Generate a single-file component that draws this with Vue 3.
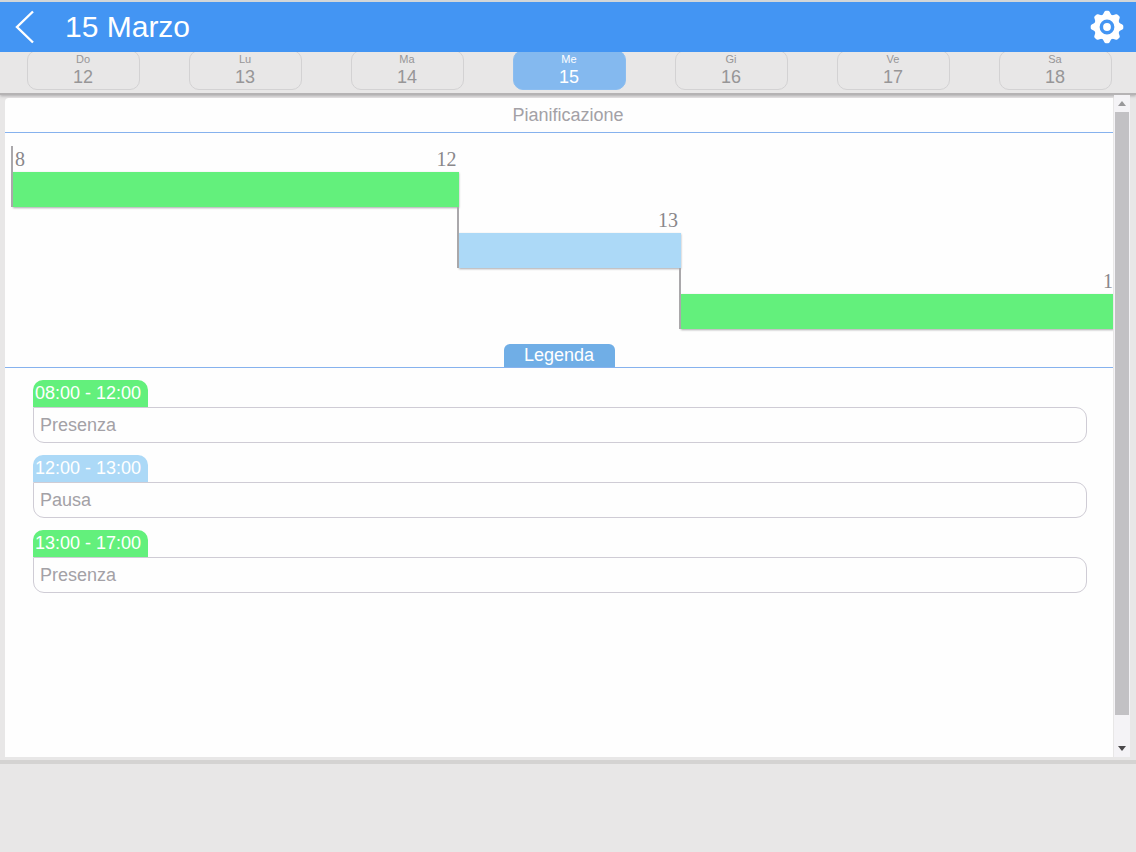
<script setup>
import { ref } from 'vue'

const days = [
  { name: 'Do', number: 12 },
  { name: 'Lu', number: 13 },
  { name: 'Ma', number: 14 },
  { name: 'Me', number: 15 },
  { name: 'Gi', number: 16 },
  { name: 'Ve', number: 17 },
  { name: 'Sa', number: 18 },
]
const selected = ref(15)

const steps = [
  { start: '8', end: '12', offset: 0, width: 40.6, kind: 'work' },
  { start: '', end: '13', offset: 40.5, width: 20.2, kind: 'rest' },
  { start: '', end: '1', offset: 60.6, width: 39.4, kind: 'work' },
]

const entries = [
  { time: '08:00 - 12:00', label: 'Presenza', kind: 'work' },
  { time: '12:00 - 13:00', label: 'Pausa', kind: 'rest' },
  { time: '13:00 - 17:00', label: 'Presenza', kind: 'work' },
]
</script>

<template>
  <div class="app">
    <header class="topbar">
      <button class="icon-button back" type="button" aria-label="Indietro">
        <svg width="20" height="34" viewBox="0 0 20 34" fill="none" stroke="#fff" stroke-width="2.4">
          <path d="M18 1.500L2 17L18 32.500" />
        </svg>
      </button>
      <h1>15 Marzo</h1>
      <button class="icon-button" type="button" aria-label="Impostazioni">
        <svg width="34" height="34" viewBox="-17 -17 34 34">
          <circle r="10.200" fill="none" stroke="#fff" stroke-width="5.600" />
          <circle r="3.900" fill="#fff" />
          <g fill="#fff">
            <path
              v-for="n in 8"
              :key="n"
              d="M-4.600 -11.500L-2.600 -15.300Q-2.100 -16.300 -1.100 -16.300H1.100Q2.100 -16.300 2.600 -15.300L4.600 -11.500Z"
              :transform="`rotate(${n * 45})`"
            />
          </g>
        </svg>
      </button>
    </header>

    <nav class="days">
      <div v-for="day in days" :key="day.number" class="day-cell">
        <button
          class="day"
          :class="{ active: day.number === selected }"
          type="button"
          @click="selected = day.number"
        >
          <span class="day-name">{{ day.name }}</span>
          <span class="day-number">{{ day.number }}</span>
        </button>
      </div>
    </nav>

    <main class="main">
      <section class="card">
        <h2 class="title">Pianificazione</h2>
        <div class="chart">
          <div
            v-for="step in steps"
            :key="step.end"
            class="step"
            :style="{ marginLeft: step.offset + '%', width: step.width + '%' }"
          >
            <div class="hours">
              <span>{{ step.start }}</span>
              <span>{{ step.end }}</span>
            </div>
            <div class="bar" :class="step.kind"></div>
          </div>
        </div>
        <div class="legend-head"><h2 class="legend-title">Legenda</h2></div>
        <ul class="entries">
          <li v-for="entry in entries" :key="entry.time">
            <div class="time" :class="entry.kind">{{ entry.time }}</div>
            <div class="label">{{ entry.label }}</div>
          </li>
        </ul>
      </section>
      <div class="scrollbar">
        <button class="arrow" type="button" aria-label="Scorri su">
          <svg width="8" height="5" viewBox="0 0 8 5"><path d="M0 5L4 0L8 5Z" fill="#98989a" /></svg>
        </button>
        <div class="rail"><div class="thumb"></div></div>
        <button class="arrow" type="button" aria-label="Scorri giù">
          <svg width="8" height="5" viewBox="0 0 8 5"><path d="M0 0L4 5L8 0Z" fill="#4a484a" /></svg>
        </button>
      </div>
    </main>
    <footer class="footer"></footer>
  </div>
</template>

<style>
body {
  background: #e8e7e7;
}
</style>

<style scoped>
.app {
  display: flex;
  flex-direction: column;
  min-height: 100vh;
  font-family: "Liberation Sans", Arial, sans-serif;
  font-size: 18px;
  color: #a3a1a6;
  background: #e8e7e7;
}
button {
  margin: 0;
  padding: 0;
  border: 0;
  background: none;
  font: inherit;
  color: inherit;
  cursor: pointer;
}
svg {
  display: block;
}
h1,
h2 {
  margin: 0;
  font-weight: 400;
}
.topbar {
  position: relative;
  z-index: 1;
  box-sizing: border-box;
  display: flex;
  align-items: center;
  height: 52px;
  padding: 0 12px 0 15px;
  border-top: 2px solid #d2d6d8;
  background: #4395f3;
  color: #fff;
}
.back {
  margin-right: 30px;
}
h1 {
  flex: 1;
  font-size: 30px;
  line-height: 36px;
}
.days {
  display: grid;
  grid-template-columns: repeat(7, 1fr);
  margin-top: -2px;
  padding-left: 2px;
  height: 43px;
  border-bottom: 2px solid #b5b3b4;
  box-shadow: 0 1px 3px #aaa8aa;
}
.day-cell {
  display: flex;
  justify-content: center;
}
.day {
  box-sizing: border-box;
  display: flex;
  flex-direction: column;
  align-items: center;
  width: 113px;
  height: 40px;
  padding-top: 2px;
  border: 1px solid #d3d2d3;
  border-radius: 10px;
  color: #979697;
}
.day.active {
  border-color: #8bbdf0;
  background: #84b9ef;
  color: #fff;
}
.day-name {
  font-size: 11px;
  line-height: 12px;
}
.day-number {
  line-height: 24px;
}
.main {
  flex: 1;
  display: flex;
  padding: 0 6px 0 5px;
}
.card {
  flex: 1;
  min-width: 0;
  margin: 3px 1px 3px 0;
  border-radius: 4px 0 0 0;
  background: #fefefe;
}
.title {
  height: 34px;
  padding-left: 18px;
  border-bottom: 1px solid #86b2ee;
  font-size: 18px;
  line-height: 34px;
  text-align: center;
}
.chart {
  overflow: hidden;
  padding: 13px 0 15px 6px;
}
.step {
  box-sizing: border-box;
  border-left: 2px solid #aaa8ab;
}
.hours {
  display: flex;
  justify-content: space-between;
  padding: 0 2px;
  height: 26px;
  font-family: "Liberation Serif", "Times New Roman", serif;
  font-size: 20px;
  line-height: 26px;
  color: #89878a;
}
.step:last-child .hours {
  padding-right: 0;
}
.bar {
  height: 35px;
  margin-right: -1px;
  box-shadow: 0 1px 2px #a9a7aa;
}
.work {
  background: #63f07c;
}
.rest {
  background: #acd9f7;
}
.legend-head {
  display: flex;
  justify-content: center;
  border-bottom: 1px solid #86b2ee;
}
.legend-title {
  width: 111px;
  border-radius: 6px 6px 0 0;
  background: #70aee6;
  color: #fff;
  font-size: 18px;
  line-height: 23px;
  text-align: center;
}
.entries {
  display: grid;
  gap: 12px;
  margin: 0;
  padding: 12px 26px 12px 28px;
  list-style: none;
}
.time {
  box-sizing: border-box;
  width: 115px;
  height: 27px;
  padding-left: 2px;
  border-radius: 10px 10px 0 0;
  color: #fff;
  line-height: 26px;
}
.label {
  height: 34px;
  padding-left: 6px;
  border: 1px solid #cfccd5;
  border-radius: 0 11px 11px 11px;
  line-height: 34px;
}
.scrollbar {
  display: flex;
  flex-direction: column;
  width: 16px;
  margin-bottom: 3px;
  background: #f4f3f6;
}
.arrow {
  display: flex;
  align-items: center;
  justify-content: center;
  height: 17px;
}
.rail {
  flex: 1;
  padding: 0 1px;
}
.thumb {
  height: 96%;
  background: #c2c1c4;
}
.footer {
  height: 88px;
  border-top: 4px solid #d4d3d2;
}
</style>
